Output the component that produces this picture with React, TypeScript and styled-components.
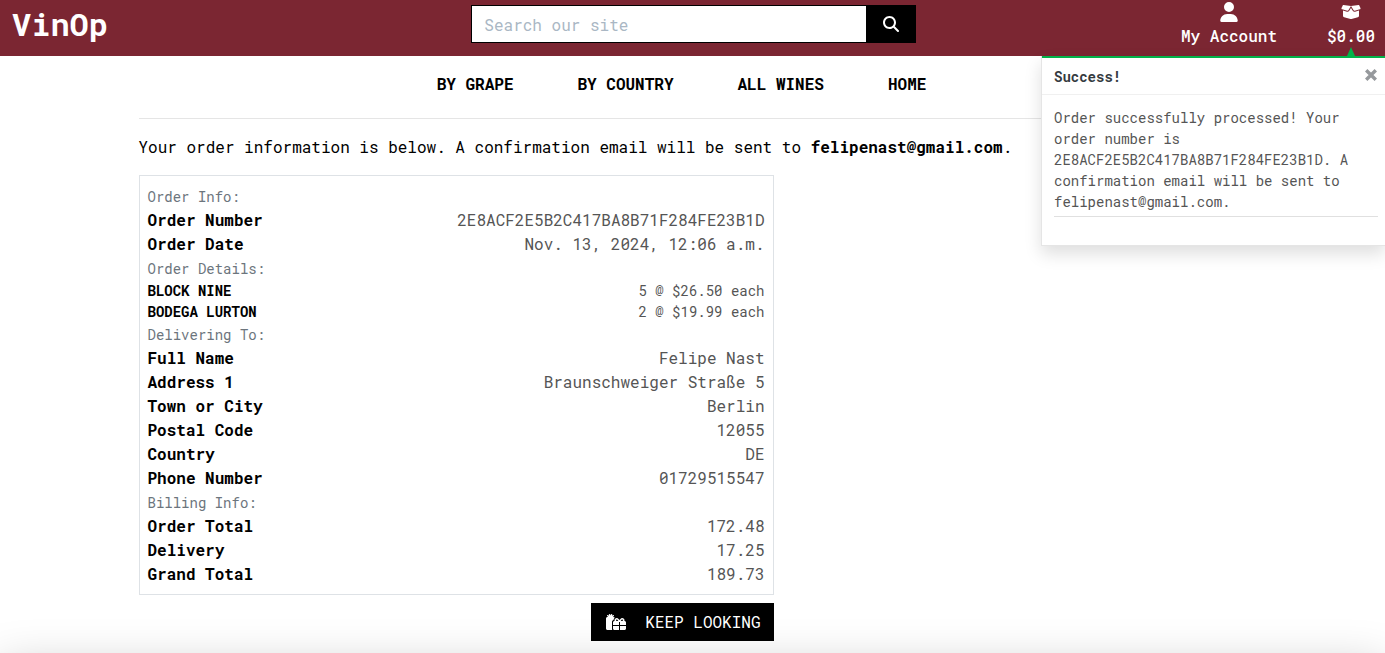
import React from "react";
import styled, { createGlobalStyle, css } from "styled-components";
import { FaBoxOpen, FaGifts, FaMagnifyingGlass, FaUser } from "react-icons/fa6";

const GlobalStyle = createGlobalStyle`
  *, *::before, *::after { box-sizing: border-box; }
  body {
    margin: 0;
    background: #fff;
    color: #555;
    font: 400 16px/24px "Roboto Mono", "Liberation Mono", monospace;
  }
  button, input { font: inherit; }
`;

const Page = styled.div`
  position: relative;
  display: flex;
  flex-direction: column;
  min-height: 100vh;
  overflow: hidden;
`;

const Header = styled.header`
  display: grid;
  grid-template-columns: repeat(3, 1fr);
  column-gap: 15px;
  height: 56px;
  padding: 0 10px 0 12px;
  background: #7b2632;
  color: #fff;
`;

const Logo = styled.a`
  justify-self: start;
  margin-top: 5px;
  color: inherit;
  font-size: 32px;
  line-height: 38px;
  font-weight: 700;
  text-decoration: none;
`;

const SearchForm = styled.form`
  display: flex;
  height: 38px;
  margin-top: 5px;
`;

const SearchInput = styled.input`
  flex: 1;
  min-width: 0;
  padding: 8px 12px 6px;
  border: 1px solid #000;
  border-radius: 0;
  background: #fff;
  color: #000;
  &::placeholder {
    color: #aab7c4;
    opacity: 1;
  }
`;

const SearchButton = styled.button`
  display: flex;
  align-items: center;
  justify-content: center;
  width: 49px;
  padding: 0;
  border: 0;
  background: #000;
  color: #fff;
`;

const UserLinks = styled.div`
  display: flex;
  justify-content: flex-end;
  gap: 50px;
`;

const UserLink = styled.a`
  display: flex;
  flex-direction: column;
  align-items: center;
  color: inherit;
  font-weight: 500;
  text-decoration: none;
  svg {
    height: 20px;
    margin: 2px 0;
  }
`;

const Container = styled.main`
  width: 100%;
  max-width: 1138px;
  margin: 0 auto;
  padding: 0 15px;
`;

const Nav = styled.nav`
  display: flex;
  justify-content: center;
  gap: 64px;
  padding: 16px 22px 22px 0;
  border-bottom: 1px solid #e5e5e5;
`;

const NavLink = styled.a`
  color: #000;
  font-weight: 700;
  text-decoration: none;
`;

const Intro = styled.p`
  margin: 16px 0;
  color: #000;
`;

const OrderColumn = styled.div`
  max-width: 635px;
`;

const OrderBox = styled.section`
  padding: 8px;
  border: 1px solid #dee2e6;
`;

const GroupTitle = styled.h2`
  margin: 0;
  padding-top: 1px;
  color: #6c757d;
  font-size: 14px;
  line-height: 23px;
  font-weight: 400;
`;

const Rows = styled.dl`
  margin: 0;
`;

const Row = styled.div<{ $small?: boolean }>`
  display: flex;
  justify-content: space-between;
  ${({ $small }) => $small && css`
    font-size: 14px;
    line-height: 21px;
  `}
`;

const Label = styled.dt`
  color: #000;
  font-weight: 700;
`;

const Value = styled.dd`
  margin: 0;
`;

const Actions = styled.div`
  display: flex;
  justify-content: flex-end;
  padding: 8px 0 12px;
`;

const KeepLooking = styled.a`
  display: flex;
  align-items: center;
  gap: 19px;
  height: 38px;
  padding: 0 13px 0 15px;
  background: #000;
  color: #fff;
  text-decoration: none;
`;

const Toast = styled.aside`
  position: absolute;
  top: 56px;
  right: 0;
  width: 344px;
  border: 1px solid #e5e5e5;
  border-top: 0;
  border-right: 0;
  background: #fff;
  box-shadow: 0 8px 16px rgba(0, 0, 0, 0.13);
  font-size: 14px;
  line-height: 21px;
  &::before {
    content: "";
    position: absolute;
    top: -9px;
    right: 30px;
    border: solid transparent;
    border-width: 0 4px 9px;
    border-bottom-color: #02b34a;
  }
`;

const ToastHead = styled.div`
  display: flex;
  align-items: center;
  justify-content: space-between;
  height: 39px;
  padding: 0 8px 0 12px;
  border-top: 2px solid #02b34a;
  border-bottom: 1px solid #f0f0f0;
  color: #343a40;
`;

const CloseButton = styled.button`
  display: flex;
  padding: 0 0 2px;
  border: 0;
  background: none;
  color: #96999c;
`;

const ToastBody = styled.div`
  padding: 12px 7px 28px 12px;
`;

const ToastText = styled.p`
  margin: 0;
  padding-bottom: 4px;
  border-bottom: 1px solid #e0e0e0;
  overflow-wrap: break-word;
`;

const Footer = styled.footer`
  margin: auto 40px 0;
  box-shadow: 0 56px 48px 40px rgba(0, 0, 0, 0.25);
`;

type Entry = [string, string];

const groups: { title: string; small?: boolean; entries: Entry[] }[] = [
  {
    title: "Order Info:",
    entries: [
      ["Order Number", "2E8ACF2E5B2C417BA8B71F284FE23B1D"],
      ["Order Date", "Nov. 13, 2024, 12:06 a.m."],
    ],
  },
  {
    title: "Order Details:",
    small: true,
    entries: [
      ["BLOCK NINE", "5 @ $26.50 each"],
      ["BODEGA LURTON", "2 @ $19.99 each"],
    ],
  },
  {
    title: "Delivering To:",
    entries: [
      ["Full Name", "Felipe Nast"],
      ["Address 1", "Braunschweiger Straße 5"],
      ["Town or City", "Berlin"],
      ["Postal Code", "12055"],
      ["Country", "DE"],
      ["Phone Number", "01729515547"],
    ],
  },
  {
    title: "Billing Info:",
    entries: [
      ["Order Total", "172.48"],
      ["Delivery", "17.25"],
      ["Grand Total", "189.73"],
    ],
  },
];

export default function App() {
  return (
    <Page>
      <GlobalStyle />
      <Header>
        <Logo href="#">VinOp</Logo>
        <SearchForm role="search">
          <SearchInput type="text" aria-label="Search our site" placeholder="Search our site" />
          <SearchButton type="submit" aria-label="Search">
            <FaMagnifyingGlass size={16} />
          </SearchButton>
        </SearchForm>
        <UserLinks>
          <UserLink href="#account">
            <FaUser size={20} />
            My Account
          </UserLink>
          <UserLink href="#bag">
            <FaBoxOpen size={20} />
            $0.00
          </UserLink>
        </UserLinks>
      </Header>
      <Container>
        <Nav>
          {["BY GRAPE", "BY COUNTRY", "ALL WINES", "HOME"].map((name) => (
            <NavLink href="#" key={name}>{name}</NavLink>
          ))}
        </Nav>
        <Intro>
          Your order information is below. A confirmation email will be sent to{" "}
          <strong>felipenast@gmail.com</strong>.
        </Intro>
        <OrderColumn>
          <OrderBox>
            {groups.map(({ title, small, entries }) => (
              <React.Fragment key={title}>
                <GroupTitle>{title}</GroupTitle>
                <Rows>
                  {entries.map(([label, value]) => (
                    <Row key={label} $small={small}>
                      <Label>{label}</Label>
                      <Value>{value}</Value>
                    </Row>
                  ))}
                </Rows>
              </React.Fragment>
            ))}
          </OrderBox>
          <Actions>
            <KeepLooking href="#wines">
              <FaGifts size={20} />
              KEEP LOOKING
            </KeepLooking>
          </Actions>
        </OrderColumn>
      </Container>
      <Toast role="status">
        <ToastHead>
          <strong>Success!</strong>
          <CloseButton type="button" aria-label="Close">
            <svg width="12" height="12" viewBox="0 0 12 12" stroke="currentColor" strokeWidth="3.4">
              <path d="M1.2 1.2 10.8 10.8M10.8 1.2 1.2 10.8" />
            </svg>
          </CloseButton>
        </ToastHead>
        <ToastBody>
          <ToastText>
            Order successfully processed! Your order number is
            2E8ACF2E5B2C417BA8B71F284FE23B1D. A confirmation email will be sent
            to felipenast@gmail.com.
          </ToastText>
        </ToastBody>
      </Toast>
      <Footer />
    </Page>
  );
}
